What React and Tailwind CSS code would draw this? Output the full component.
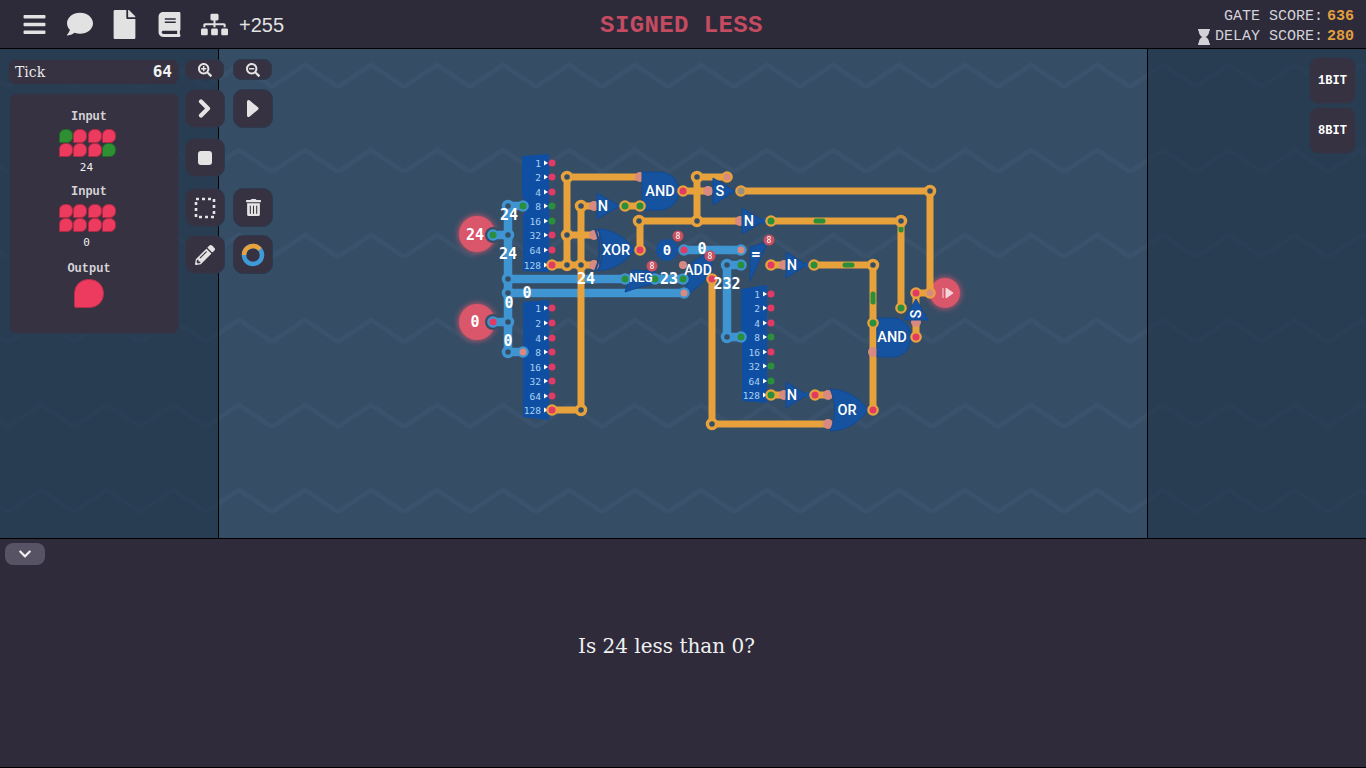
import React from "react";
import {
  FaBars,
  FaBook,
  FaChevronDown,
  FaComment,
  FaFile,
  FaHourglass,
  FaPencilAlt,
  FaSearchMinus,
  FaSearchPlus,
  FaSitemap,
  FaTrashAlt,
} from "react-icons/fa";

const MONO = "font-['Liberation_Mono',monospace]";
const ORANGE = "#e8a23c";
const BLUE = "#3f95d1";
const GATE = "#15529f";
const BG = "#364d66";
const RED = "#e23a62";
const GREEN = "#2a8f3a";
const PINK = "#d98a80";

const orangeWires = [
  "M567 177H639M567 177V265M567 235H596M552 265H596",
  "M581 206V410H552M581 206H600M625 206H640",
  "M683 191H712M697 177V221M697 177H727M741 191H930V293H915",
  "M640 250V221H745M771 221H901V308",
  "M771 265H790M814 265H873V410M916 293V337",
  "M712 279V424H828M771 395H790M815 395H830",
];

const blueWires = [
  "M522 206H508V352H522M493 235H508M493 322H508",
  "M508 279H630M508 293H684M655 279H683",
  "M684 250H741M727 265H741M727 265V337H741",
];

const pulses = [
  "M816 221H823",
  "M845 265H852",
  "M873 294V302",
  "M901 228V230",
];

const orangeNodes = [
  [567, 177], [567, 235], [567, 265], [581, 206], [581, 265], [581, 410],
  [697, 177], [697, 221], [639, 221], [930, 191], [901, 221], [873, 265],
  [712, 424],
];

const blueNodes = [
  [508, 206], [508, 235], [508, 279], [508, 293], [508, 322], [508, 352], [727, 265], [727, 337],
];

// [x, y, ring, pin]
const pins = [
  [683, 191, ORANGE, RED], [640, 250, ORANGE, RED], [771, 265, ORANGE, RED],
  [873, 410, ORANGE, RED], [712, 279, ORANGE, RED], [916, 293, ORANGE, RED],
  [916, 337, ORANGE, RED], [815, 395, ORANGE, RED], [552, 265, ORANGE, RED],
  [552, 410, ORANGE, RED], [771, 395, ORANGE, GREEN], [727, 177, ORANGE, PINK],
  [741, 191, ORANGE, "#9a8f7f"], [625, 206, ORANGE, GREEN], [640, 206, ORANGE, GREEN],
  [771, 221, ORANGE, GREEN], [814, 265, ORANGE, GREEN], [901, 308, ORANGE, GREEN],
  [873, 323, ORANGE, GREEN], [930, 293, ORANGE, PINK],
  [523, 206, BLUE, GREEN], [493, 235, BLUE, GREEN], [493, 322, BLUE, RED],
  [523, 352, BLUE, PINK], [625, 279, BLUE, GREEN], [655, 279, BLUE, GREEN],
  [683, 279, BLUE, GREEN], [684, 293, BLUE, PINK], [684, 250, BLUE, RED],
  [741, 250, BLUE, PINK], [741, 265, BLUE, GREEN], [741, 337, BLUE, GREEN],
];

const gateInputs = [
  [640, 177], [594, 206], [594, 235], [594, 265], [740, 221], [784, 265], [784, 395],
  [708, 191], [828, 395], [828, 424], [873, 352], [916, 322],
];

const labels = [
  ["24", 509, 215], ["24", 508, 254], ["24", 586, 279], ["0", 527, 293], ["0", 509, 303],
  ["0", 508, 341], ["23", 669, 279], ["0", 702, 249], ["232", 727, 284],
];

const badges = [
  [678, 236], [652, 266], [710, 256], [769, 240],
];

const headerIcons = [
  <FaBars size={25} />,
  <FaComment size={26} />,
  <FaFile size={29} />,
  <FaBook size={25} />,
  <FaSitemap size={27} />,
];

function Gate({ d, label, x, y, size = 14.5 }) {
  return (
    <g>
      <path d={d} fill={GATE} stroke="#124a93" strokeWidth="1" />
      <text x={x} y={y} fill="#fff" fontFamily="Roboto, sans-serif" fontWeight="500" fontSize={size} textAnchor="middle" dominantBaseline="central">
        {label}
      </text>
    </g>
  );
}

function BitChip({ d, x, rows, pinX }) {
  return (
    <g>
      <path d={d} fill="#0f4fa3" />
      {rows.map(([label, y, color]) => (
        <g key={label}>
          <text x={x} y={y} fill="#a9d2f3" fontFamily="'DejaVu Sans Mono', monospace" fontSize="9.5" textAnchor="end" dominantBaseline="central">
            {label}
          </text>
          <path d={`M${x + 3} ${y - 2.5}l4 2.5l-4 2.5z`} fill="#fff" />
          <circle cx={pinX} cy={y} r="3.5" fill={color} />
        </g>
      ))}
    </g>
  );
}

function Circuit() {
  const topRows = [
    ["1", 163, RED], ["2", 177, RED], ["4", 192, RED], ["8", 206, GREEN],
    ["16", 221, GREEN], ["32", 235, RED], ["64", 250, RED], ["128", 265, RED],
  ];
  const lowRows = [
    ["1", 308, RED], ["2", 323, RED], ["4", 338, RED], ["8", 352, RED],
    ["16", 367, RED], ["32", 381, RED], ["64", 396, RED], ["128", 410, RED],
  ];
  const rightRows = [
    ["1", 294, RED], ["2", 308, RED], ["4", 323, RED], ["8", 337, GREEN],
    ["16", 352, RED], ["32", 366, GREEN], ["64", 381, GREEN], ["128", 395, GREEN],
  ];

  return (
    <svg viewBox="219 49 928 489" className="w-full h-full block relative">
      {/* input and output pads */}
      <circle cx="477" cy="234" r="18" fill="#d9566b" className="drop-shadow-[0_0_3px_#e0566b]" />
      <circle cx="477" cy="322" r="18" fill="#d9566b" className="drop-shadow-[0_0_3px_#e0566b]" />
      <circle cx="945" cy="293" r="15" fill="#d9566b" className="drop-shadow-[0_0_3px_#e0566b]" />
      <circle cx="493" cy="235" r="8" fill={BG} />
      <circle cx="493" cy="322" r="8" fill={BG} />
      <path d="M943 288v10M946 288l7 5l-7 5z" stroke="#f3d6da" strokeWidth="1" fill="#f3d6da" />

      <BitChip d="M522 156L549 154V272L523 271V215L529 207L522 197Z" x={541} rows={topRows} pinX={552} />
      <BitChip d="M523 302L549 300V420L523 417V358L529 352L523 345Z" x={541} rows={lowRows} pinX={552} />
      <BitChip d="M741 289L767 285V403L742 401V343L745 337L741 331Z" x={760} rows={rightRows} pinX={771} />

      {blueWires.map((d) => (
        <path key={d} d={d} fill="none" stroke={BLUE} strokeWidth="8.5" />
      ))}
      {orangeWires.map((d) => (
        <path key={d} d={d} fill="none" stroke={ORANGE} strokeWidth="7" />
      ))}
      {pulses.map((d) => (
        <path key={d} d={d} fill="none" stroke={GREEN} strokeWidth="5" strokeLinecap="round" />
      ))}

      {gateInputs.map(([x, y]) => (
        <circle key={`${x}-${y}`} cx={x} cy={y} r="5" fill={PINK} />
      ))}

      <Gate d="M642 172H660C671 172 679 181 679 191C679 201 671 210 660 210H642Z" label="AND" x={660} y={191} />
      <Gate d="M877 318H893C904 318 911 327 911 337C911 348 904 357 893 357H877Z" label="AND" x={892} y={337} />
      <path d="M595 229C601 242 601 258 595 271" fill="none" stroke="#124a93" strokeWidth="2" />
      <Gate d="M598 229C613 229 626 238 635 250C626 262 613 270 598 271C604 258 604 242 598 229Z" label="XOR" x={616} y={250} />
      <Gate d="M830 389C846 389 860 398 868 410C860 422 846 431 830 431C836 418 836 402 830 389Z" label="OR" x={847} y={410} />
      <Gate d="M597 193L620 206L597 219Z" label="N" x={603} y={206} />
      <Gate d="M742 208L764 221L742 234Z" label="N" x={749} y={221} />
      <Gate d="M786 252L807 265L786 278Z" label="N" x={792} y={265} />
      <Gate d="M786 382L807 395L786 408Z" label="N" x={792} y={395} />
      <Gate d="M713 178L735 191L713 205Z" label="S" x={720} y={191} />
      <Gate d="M625 292L632 270L655 271L658 283L640 287Z" label="" x={641} y={278} />
      <Gate d="M684 297L692 262L712 251L712 272L700 285Z" label="" x={698} y={270} />
      <Gate d="M750 247L768 242L750 281Z" label="" x={756} y={254} />

      <path d="M916 299L928 320H904Z" fill={GATE} stroke="#124a93" />
      <text transform="translate(916 314) rotate(-90)" fill="#fff" fontFamily="Roboto, sans-serif" fontWeight="500" fontSize="14" textAnchor="middle" dominantBaseline="central">
        S
      </text>

      <circle cx="667" cy="250" r="11" fill={GATE} />
      <circle cx="621" cy="206" r="3" fill={GATE} />
      <circle cx="765" cy="221" r="3" fill={GATE} />
      <circle cx="808" cy="265" r="3" fill={GATE} />
      <circle cx="808" cy="395" r="3" fill={GATE} />
      <circle cx="683" cy="265" r="4" fill={PINK} />

      {orangeNodes.map(([x, y]) => (
        <circle key={`${x}-${y}`} cx={x} cy={y} r="4.5" fill={BG} stroke={ORANGE} strokeWidth="3.5" />
      ))}
      {blueNodes.map(([x, y]) => (
        <circle key={`${x}-${y}`} cx={x} cy={y} r="4.5" fill={BG} stroke={BLUE} strokeWidth="3.5" />
      ))}
      {pins.map(([x, y, ring, pin]) => (
        <g key={`${x}-${y}`}>
          <circle cx={x} cy={y} r="5.8" fill={ring} />
          <circle cx={x} cy={y} r="3.5" fill={pin} />
        </g>
      ))}

      {badges.map(([x, y]) => (
        <g key={`${x}-${y}`}>
          <circle cx={x} cy={y} r="5.5" fill="#c94f5f" />
          <text x={x} y={y} fill="#fff" fontFamily="'DejaVu Sans Mono', monospace" fontSize="8" textAnchor="middle" dominantBaseline="central">
            8
          </text>
        </g>
      ))}

      <text x="641" y="278" fill="#fff" fontFamily="Roboto, sans-serif" fontWeight="500" fontSize="12" textAnchor="middle" dominantBaseline="central">
        NEG
      </text>
      <text x="698" y="270" fill="#fff" fontFamily="Roboto, sans-serif" fontWeight="500" fontSize="14" textAnchor="middle" dominantBaseline="central">
        ADD
      </text>
      <text x="756" y="254" fill="#fff" fontFamily="Roboto, sans-serif" fontWeight="700" fontSize="17" textAnchor="middle" dominantBaseline="central">
        =
      </text>
      <text x="667" y="250" fill="#fff" fontFamily="'DejaVu Sans Mono', monospace" fontWeight="700" fontSize="14" textAnchor="middle" dominantBaseline="central">
        0
      </text>
      <text x="475" y="235" fill="#fff" fontFamily="'DejaVu Sans Mono', monospace" fontWeight="700" fontSize="15" textAnchor="middle" dominantBaseline="central">
        24
      </text>
      <text x="475" y="322" fill="#fff" fontFamily="'DejaVu Sans Mono', monospace" fontWeight="700" fontSize="15" textAnchor="middle" dominantBaseline="central">
        0
      </text>
      {labels.map(([text, x, y]) => (
        <text key={`${x}-${y}`} x={x} y={y} fill="#fff" fontFamily="'DejaVu Sans Mono', monospace" fontWeight="700" fontSize="15" textAnchor="middle" dominantBaseline="central">
          {text}
        </text>
      ))}
    </svg>
  );
}

function ZigzagBackground() {
  return (
    <svg className="absolute inset-0 w-full h-full" aria-hidden="true">
      <defs>
        <pattern id="zigzag" x="8" y="81" width="66" height="85" patternUnits="userSpaceOnUse">
          <path d="M0 42L33 20L66 42" fill="none" stroke="#41597366" strokeWidth="4.5" />
        </pattern>
      </defs>
      <rect width="100%" height="100%" fill="url(#zigzag)" />
    </svg>
  );
}

function Tile({ on, big }) {
  if (big) {
    return <div className="w-[30px] h-[29px] rounded-[14px] rounded-bl-[2px] bg-[#ec3b5e] border border-[#b52f4a]" />;
  }
  return (
    <div
      className={
        on
          ? "w-[14px] h-[14px] rounded-[6px] rounded-bl-[1px] bg-[#2f8f33] border border-[#1f6a28]"
          : "w-[14px] h-[14px] rounded-[6px] rounded-bl-[1px] bg-[#ec3b5e] border border-[#ad2a45]"
      }
    />
  );
}

function ToolButton({ children, className = "" }) {
  return (
    <button className={`w-[40px] h-[39px] flex items-center justify-center rounded-[10px] bg-[#363241] border border-[#2b3a4e] text-[#e4e4e4] ${className}`}>
      {children}
    </button>
  );
}

function ZoomButton({ children, className = "" }) {
  return (
    <button className={`w-[39px] h-[21px] flex items-center justify-center rounded-[8px] bg-[#363241] border border-[#2b3a4e] text-[#e4e4e4] ${className}`}>
      {children}
    </button>
  );
}

function TileGroup({ title, value, bits }) {
  return (
    <div className="flex flex-col items-center">
      <div className={`${MONO} text-[12px] leading-[14px] font-bold text-[#d5d3d8]`}>{title}</div>
      <div className="grid grid-cols-4 gap-x-[0.3px] mt-[5px] mr-[3px]">
        {bits.map((on, i) => (
          <Tile key={i} on={on} />
        ))}
      </div>
      <div className="font-['DejaVu_Sans_Mono',monospace] text-[11px] leading-[12px] mt-[5px] mr-[5px] text-[#f0f0f0]">{value}</div>
    </div>
  );
}

export default function App() {
  const input24 = [true, false, false, false, false, false, false, true];
  const input0 = [false, false, false, false, false, false, false, false];

  return (
    <div className="w-[1366px] h-[768px] flex flex-col overflow-hidden bg-[#2f2b3b]">
      <header className="h-[49px] shrink-0 grid grid-cols-3 items-center bg-[#2d2a3a] border-b border-black text-[#e2e2e2]">
        <div className="flex items-center pl-[12px]">
          {headerIcons.map((icon, i) => (
            <div key={i} className="w-[45px] flex justify-center">
              {icon}
            </div>
          ))}
          <span className="ml-[2px] pt-[2px] font-['Liberation_Sans',sans-serif] text-[20px]">+255</span>
        </div>
        <div className={`${MONO} text-center pr-[3px] pt-[3px] text-[24px] font-bold tracking-[0.4px] text-[#c44b60]`}>SIGNED LESS</div>
        <div className={`${MONO} flex flex-col items-end pr-[12px] pt-[5px] text-[15px] leading-[20px] text-[#d3d2d8]`}>
          <div>
            GATE SCORE:<span className="ml-[4px] font-bold text-[#e29f3e]">636</span>
          </div>
          <div className="flex items-center">
            <FaHourglass size={16} className="mr-[3px]" />
            DELAY SCORE:<span className="ml-[4px] font-bold text-[#e29f3e]">280</span>
          </div>
        </div>
      </header>

      <div className="h-[490px] shrink-0 relative flex bg-[#364d66] border-b border-black">
        <ZigzagBackground />

        <aside className="w-[219px] shrink-0 relative z-10 bg-[#0f1e2e]/35 border-r border-black pt-[10px] flex">
          <div className="w-[185px] shrink-0 pl-[8px] pr-[6px]">
            <div className="h-[26px] px-[6px] flex items-center justify-between rounded-[8px] bg-[#363241] border border-[#2b3a4e]">
              <span className="font-['DejaVu_Serif',serif] text-[14px] text-[#e8e8e8] pt-[1px]">Tick</span>
              <span className="font-['DejaVu_Sans_Mono',monospace] text-[16px] font-bold text-[#f2f2f2]">64</span>
            </div>
            <div className="mt-[8px] ml-[1px] h-[241px] pt-[16px] pr-[10px] flex flex-col items-center rounded-[8px] bg-[#363241] border border-[#2b3a4e]">
              <TileGroup title="Input" value="24" bits={input24} />
              <div className="mt-[11px]">
                <TileGroup title="Input" value="0" bits={input0} />
              </div>
              <div className={`${MONO} mt-[13px] text-[12px] leading-[14px] font-bold text-[#d5d3d8]`}>Output</div>
              <div className="mt-[3px]">
                <Tile big />
              </div>
            </div>
          </div>

          <div className="shrink-0 grid grid-cols-[40px_40px] gap-x-[8px] content-start">
            <ZoomButton>
              <FaSearchPlus size={14} />
            </ZoomButton>
            <ZoomButton>
              <FaSearchMinus size={14} />
            </ZoomButton>
            <ToolButton className="mt-[9px]">
              <svg width="14" height="19" viewBox="0 0 14 19">
                <path d="M3 2.5L10 9.5L3 16.5" fill="none" stroke="#e4e4e4" strokeWidth="4.2" strokeLinecap="round" strokeLinejoin="round" />
              </svg>
            </ToolButton>
            <ToolButton className="mt-[9px]">
              <svg width="14" height="19" viewBox="0 0 14 19">
                <path d="M2.5 2.5L11 9.5L2.5 16.5Z" fill="#e4e4e4" stroke="#e4e4e4" strokeWidth="3" strokeLinejoin="round" />
              </svg>
            </ToolButton>
            <ToolButton className="mt-[10px] col-span-2">
              <div className="w-[14px] h-[14px] rounded-[3px] bg-[#e4e4e4]" />
            </ToolButton>
            <ToolButton className="mt-[11px]">
              <svg width="22" height="22" viewBox="0 0 22 22">
                <rect x="2" y="2" width="18" height="18" fill="none" stroke="#e4e4e4" strokeWidth="2.6" strokeDasharray="3 3" />
              </svg>
            </ToolButton>
            <ToolButton className="mt-[11px]">
              <FaTrashAlt size={17} />
            </ToolButton>
            <ToolButton className="mt-[8px]">
              <FaPencilAlt size={20} />
            </ToolButton>
            <ToolButton className="mt-[8px]">
              <svg width="24" height="24" viewBox="0 0 24 24">
                <circle cx="12" cy="12" r="9" fill="none" stroke="#3f9ad8" strokeWidth="4.5" />
                <path d="M3 12A9 9 0 0 1 19 6.4" fill="none" stroke="#e8a23c" strokeWidth="4.5" />
              </svg>
            </ToolButton>
          </div>
        </aside>

        <main className="relative flex-1 min-w-0">
          <Circuit />
        </main>

        <aside className="w-[219px] shrink-0 relative z-10 bg-[#0f1e2e]/35 border-l border-black pt-[8px] pr-[10px] flex flex-col items-end gap-[3px]">
          <button className={`${MONO} w-[47px] h-[47px] rounded-[10px] bg-[#363241] border border-[#2b3a4e] text-[12px] font-bold text-white`}>1BIT</button>
          <button className={`${MONO} w-[47px] h-[47px] rounded-[10px] bg-[#363241] border border-[#2b3a4e] text-[12px] font-bold text-white`}>8BIT</button>
        </aside>
      </div>

      <section className="flex-1 relative border-b border-black">
        <button className="absolute left-[5px] top-[4px] w-[40px] h-[22px] flex items-center justify-center rounded-[8px] bg-[#575264] text-[#f0f0f0]">
          <FaChevronDown size={14} />
        </button>
        <div className="h-full flex items-center justify-center pr-[33px] pb-[14px] font-['DejaVu_Serif',serif] text-[20px] text-[#f0f0f0]">
          Is 24 less than 0?
        </div>
      </section>
    </div>
  );
}
